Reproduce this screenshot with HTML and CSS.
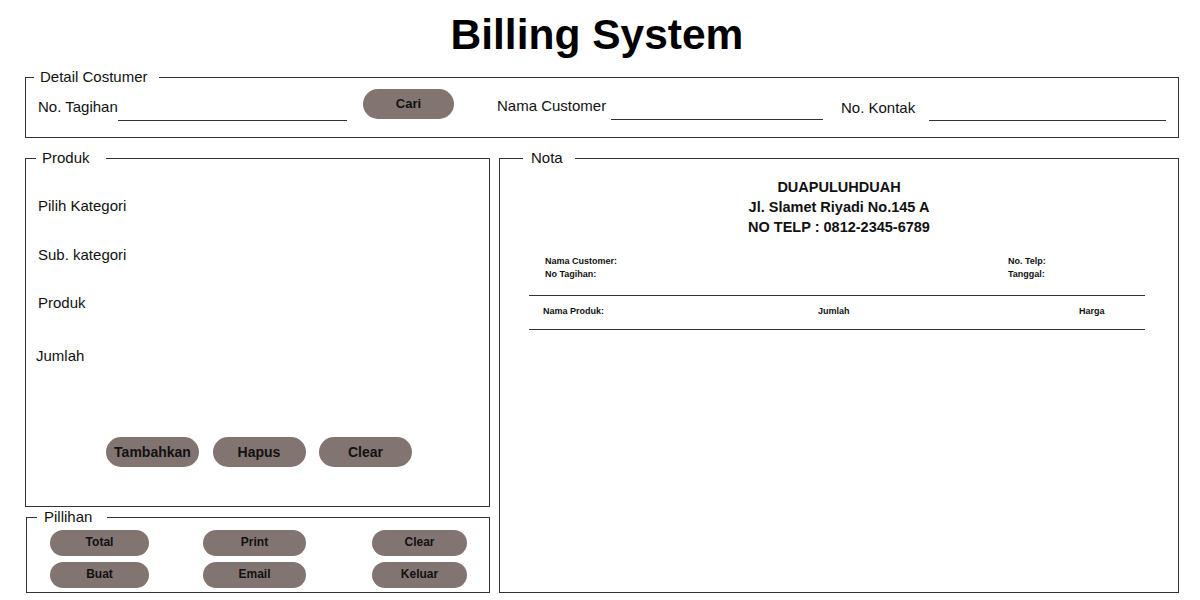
FILE: index.html
```html
<!DOCTYPE html>
<html lang="id">
<head>
<meta charset="utf-8">
<title>Billing System</title>
<link rel="stylesheet" href="styles.css">
</head>
<body>
<div class="page">
  <h1 class="title">Billing System</h1>

  <fieldset class="panel detail">
    <legend class="lg lg-detail">Detail Costumer</legend>
    <div class="detail-row">
      <span class="dlabel w-tagihan">No. Tagihan</span>
      <span class="uline u-tagihan"></span>
      <button class="btn btn-cari">Cari</button>
      <span class="dlabel w-nama">Nama Customer</span>
      <span class="uline u-nama"></span>
      <span class="dlabel w-kontak">No. Kontak</span>
      <span class="uline u-kontak"></span>
    </div>
  </fieldset>

  <div class="main">
    <div class="left-col">
      <fieldset class="panel produk">
        <legend class="lg lg-produk">Produk</legend>
        <div class="plabel pl-1">Pilih Kategori</div>
        <div class="plabel pl-2">Sub. kategori</div>
        <div class="plabel pl-3">Produk</div>
        <div class="plabel pl-4">Jumlah</div>
        <div class="prod-actions">
          <button class="btn btn-lg">Tambahkan</button>
          <button class="btn btn-lg">Hapus</button>
          <button class="btn btn-lg">Clear</button>
        </div>
      </fieldset>

      <fieldset class="panel pilihan">
        <legend class="lg lg-pilihan">Pillihan</legend>
        <div class="pil-grid">
          <button class="btn btn-sm c1">Total</button>
          <button class="btn btn-sm c2">Print</button>
          <button class="btn btn-sm c3">Clear</button>
          <button class="btn btn-sm c1">Buat</button>
          <button class="btn btn-sm c2">Email</button>
          <button class="btn btn-sm c3">Keluar</button>
        </div>
      </fieldset>
    </div>

    <fieldset class="panel nota">
      <legend class="lg lg-nota">Nota</legend>
      <div class="nota-head">
        <div>DUAPULUHDUAH</div>
        <div>Jl. Slamet Riyadi No.145 A</div>
        <div>NO TELP : 0812-2345-6789</div>
      </div>
      <div class="nota-body">
        <div class="info">
          <span>Nama Customer:</span><span>No. Telp:</span>
          <span>No Tagihan:</span><span>Tanggal:</span>
        </div>
        <div class="items-head">
          <span class="ih-nama">Nama Produk:</span>
          <span class="ih-jumlah">Jumlah</span>
          <span class="ih-harga">Harga</span>
        </div>
      </div>
    </fieldset>
  </div>
</div>
</body>
</html>
```

FILE: styles.css
```css
* { box-sizing: border-box; }

html, body {
  margin: 0;
  padding: 0;
  background: #ffffff;
}

body {
  font-family: "Liberation Sans", Arial, sans-serif;
  color: #111111;
  width: 1200px;
  height: 600px;
  overflow: hidden;
}

.page {
  padding: 0 21px 0 25px;
}

.title {
  margin: 0 5px 9px -5px;
  padding-top: 11px;
  font-size: 42.5px;
  line-height: 48px;
  font-weight: bold;
  text-align: center;
  color: #000;
}

.panel {
  margin: 0;
  padding: 0;
  border: 1px solid #333333;
  min-inline-size: 0;
}

.lg {
  font-size: 15px;
  line-height: 18px;
  padding: 0;
  color: #111;
}
.lg-detail  { margin-left: 8px;  padding: 0 11px 0 6px; }
.lg-produk  { margin-left: 10px; padding: 0 16px 0 6px; }
.lg-pilihan { margin-left: 10px; padding: 0 15px 0 7px; }
.lg-nota    { margin-left: 23px; padding: 0 12px 0 8px; }

/* Detail customer */
.detail {
  height: 70px;
}
.detail-row {
  display: flex;
  height: 32px;
  margin-top: 3px;
  padding-left: 12px;
}
.dlabel {
  font-size: 15px;
  line-height: 18px;
  align-self: center;
  margin-top: 3px;
  white-space: nowrap;
}
.w-tagihan { width: 80px; }
.w-nama    { width: 114px; margin-left: 43px; margin-top: 1px; }
.w-kontak  { width: 88px; margin-left: 18px; margin-top: 5px; }
.uline {
  align-self: flex-end;
  height: 1px;
  background: #333;
}
.u-tagihan { width: 229px; }
.u-nama    { width: 212px; margin-bottom: 1px; }
.u-kontak  { width: 237px; }

.btn {
  border: none;
  background: #827470;
  color: #111;
  font-family: "Liberation Sans", Arial, sans-serif;
  font-weight: bold;
  border-radius: 999px;
  padding: 0;
  cursor: pointer;
}
.btn-cari {
  width: 91px;
  height: 30px;
  margin-left: 16px;
  padding-bottom: 2px;
  font-size: 13px;
  align-self: flex-start;
}

/* Main area */
.main {
  display: flex;
  gap: 9px;
  margin-top: 11px;
}
.left-col {
  width: 465px;
  display: flex;
  flex-direction: column;
}
.produk {
  height: 358px;
}
.plabel {
  font-size: 15px;
  line-height: 18px;
  padding-left: 12px;
}
.pl-1 { margin-top: 30px; }
.pl-2 { margin-top: 31px; }
.pl-3 { margin-top: 30px; }
.pl-4 { margin-top: 35px; padding-left: 10px; }

.prod-actions {
  display: flex;
  gap: 13.5px;
  margin-top: 72px;
  padding-left: 80px;
}
.btn-lg {
  width: 93px;
  height: 30px;
  padding-bottom: 1px;
  font-size: 14px;
}

.pilihan {
  height: 85px;
  margin-top: 1px;
  margin-left: 1px;
}
.pil-grid {
  display: grid;
  grid-template-columns: 99px 1fr 95px;
  row-gap: 6px;
  padding: 4px 22px 0 23px;
}
.btn-sm {
  height: 26px;
  padding-bottom: 2px;
  font-size: 12px;
}
.c1 { width: 99px; }
.c2 { width: 103px; justify-self: center; margin-right: 12px; }
.c3 { width: 95px; }

/* Nota */
.nota {
  flex: 1;
  height: 444px;
}
.nota-head {
  padding-top: 10px;
  text-align: center;
  font-weight: bold;
  font-size: 14.5px;
  line-height: 20px;
}
.nota-body {
  margin: 18px 33px 0 29px;
}
.info {
  display: grid;
  grid-template-columns: 463px auto;
  padding-left: 16px;
  font-size: 9px;
  font-weight: bold;
  line-height: 13px;
}
.items-head {
  display: flex;
  margin-top: 14px;
  height: 35px;
  border-top: 1px solid #333;
  border-bottom: 1px solid #333;
  align-items: center;
  padding: 0 0 3px 14px;
  font-size: 9px;
  font-weight: bold;
}
.ih-nama   { width: 275px; }
.ih-jumlah { width: 261px; }
```
